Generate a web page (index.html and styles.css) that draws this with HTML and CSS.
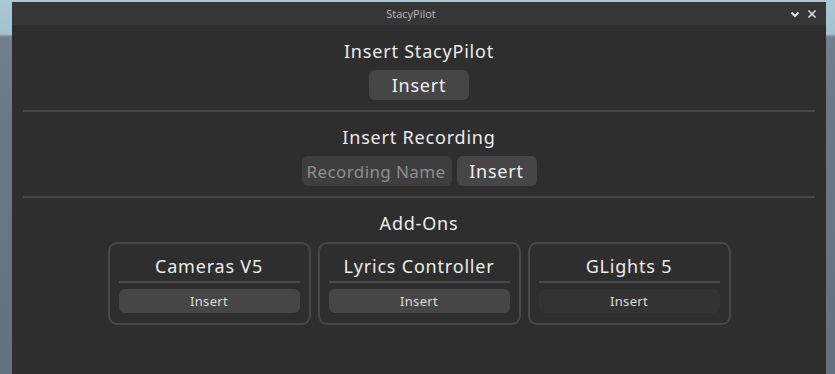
FILE: index.html
```html
<!DOCTYPE html>
<html lang="en">
<head>
    <meta charset="UTF-8">
    <title>StacyPilot</title>
    <link rel="stylesheet" href="styles.css">
</head>
<body>
    <div class="window">
        <div class="titlebar">
            <span class="title">StacyPilot</span>
            <div class="controls">
                <svg width="10" height="8" viewBox="0 0 10 8"><path d="M1.5 2.5 L5 6 L8.5 2.5" fill="none" stroke="#e0e0e0" stroke-width="2"/></svg>
                <svg width="10" height="10" viewBox="0 0 10 10"><path d="M1.5 1.5 L8.5 8.5 M8.5 1.5 L1.5 8.5" fill="none" stroke="#e0e0e0" stroke-width="1.6"/></svg>
            </div>
        </div>

        <div class="content">
            <div class="section">
                <h2>Insert StacyPilot</h2>
                <button class="btn">Insert</button>
            </div>
            <div class="divider"></div>

            <div class="section">
                <h2>Insert Recording</h2>
                <div class="row">
                    <input class="field" type="text" placeholder="Recording Name">
                    <button class="btn btn-small">Insert</button>
                </div>
            </div>
            <div class="divider"></div>

            <div class="section">
                <h2>Add-Ons</h2>
                <div class="addons">
                    <div class="card">
                        <div class="card-title">Cameras V5</div>
                        <div class="card-line"></div>
                        <button class="card-btn">Insert</button>
                    </div>
                    <div class="card">
                        <div class="card-title">Lyrics Controller</div>
                        <div class="card-line"></div>
                        <button class="card-btn">Insert</button>
                    </div>
                    <div class="card">
                        <div class="card-title">GLights 5</div>
                        <div class="card-line"></div>
                        <button class="card-btn dim">Insert</button>
                    </div>
                </div>
            </div>
        </div>
    </div>
</body>
</html>
```

FILE: styles.css
```css
html, body {
    margin: 0;
    height: 100%;
}
body {
    padding: 2px 9px 0 12px;
    box-sizing: border-box;
    overflow: hidden;
    background: linear-gradient(180deg, #a9c8d6 0px, #a3c1cf 34px, #74808e 37px, #6c7785 120px, #66717f 374px);
    font-family: "Noto Sans", "Open Sans", sans-serif;
}
.window {
    height: 372px;
    background: #2e2e2e;
    display: flex;
    flex-direction: column;
    border-radius: 2px 2px 0 0;
}
.titlebar {
    height: 23px;
    background: #363636;
    display: flex;
    align-items: center;
    justify-content: center;
    position: relative;
}
.title {
    font-family: "Open Sans", sans-serif;
    font-size: 11px;
    color: #b9b9b9;
    margin-left: -16px;
}
.controls {
    position: absolute;
    right: 9px;
    top: 7px;
    display: flex;
    gap: 7px;
    align-items: center;
}
.controls svg { display: block; }
.content {
    padding: 14px 11px 0;
    display: flex;
    flex-direction: column;
}
.section {
    display: flex;
    flex-direction: column;
    align-items: center;
    gap: 7px;
}
h2 {
    margin: 0;
    font-size: 18px;
    font-weight: 400;
    line-height: 24px;
    color: #ececec;
    letter-spacing: 0.8px;
}
.divider {
    height: 2px;
    background: #464646;
    margin: 10px 0 13px;
}
.row {
    display: flex;
    gap: 5px;
}
.btn {
    width: 100px;
    height: 30px;
    border: none;
    border-radius: 6px;
    background: #464646;
    color: #efefef;
    font-family: inherit;
    font-size: 18px;
    padding: 0;
    letter-spacing: 0.8px;
}
.btn-small { width: 80px; }
.field {
    width: 150px;
    height: 30px;
    box-sizing: border-box;
    border: none;
    border-radius: 6px;
    background: #3e3e3e;
    padding: 0 0 0 5px;
    font-family: inherit;
    font-size: 17px;
    letter-spacing: 0.4px;
    color: #ddd;
    outline: none;
}
.field::placeholder { color: #8e8e8e; }
.addons {
    display: flex;
    gap: 7px;
}
.card {
    width: 203px;
    box-sizing: border-box;
    border: 2px solid #474747;
    border-radius: 9px;
    padding: 10px 9px 10px;
    display: flex;
    flex-direction: column;
}
.card-title {
    text-align: center;
    font-size: 18px;
    line-height: 24px;
    color: #ececec;
    letter-spacing: 0.8px;
}
.card-line {
    height: 2px;
    background: #4a4a4a;
    margin-top: 3px;
}
.card-btn {
    margin-top: 6px;
    height: 24px;
    border: none;
    border-radius: 6px;
    background: #464646;
    color: #dedede;
    font-family: inherit;
    font-size: 13px;
    letter-spacing: 0.3px;
    padding: 0;
}
.card-btn.dim { background: #333333; }
```
